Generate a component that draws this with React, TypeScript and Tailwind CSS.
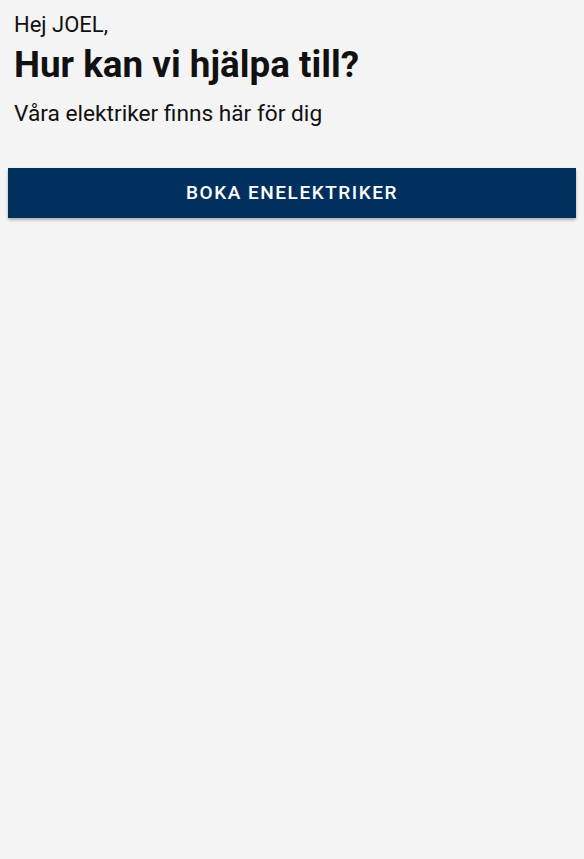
export default function App() {
  return (
    <div className="min-h-screen bg-[#f4f4f4] px-2 font-['Roboto',sans-serif] text-[#111]">
      <div className="px-[6px] pt-[10px]">
        <p className="text-[22px] leading-[30px]">Hej JOEL,</p>
        <h1 className="mt-[5px] text-[36.8px] font-bold leading-[40px]">Hur kan vi hjälpa till?</h1>
        <p className="mt-[15px] text-[22.7px] leading-[28px]">Våra elektriker finns här för dig</p>
      </div>
      <button className="mt-[40px] flex h-[50px] w-full items-center justify-center bg-[#01305f] text-[19px] font-medium tracking-[0.08em] text-white shadow-[0_2px_3px_rgba(0,0,0,0.3)]">
        BOKA ENELEKTRIKER
      </button>
    </div>
  );
}
